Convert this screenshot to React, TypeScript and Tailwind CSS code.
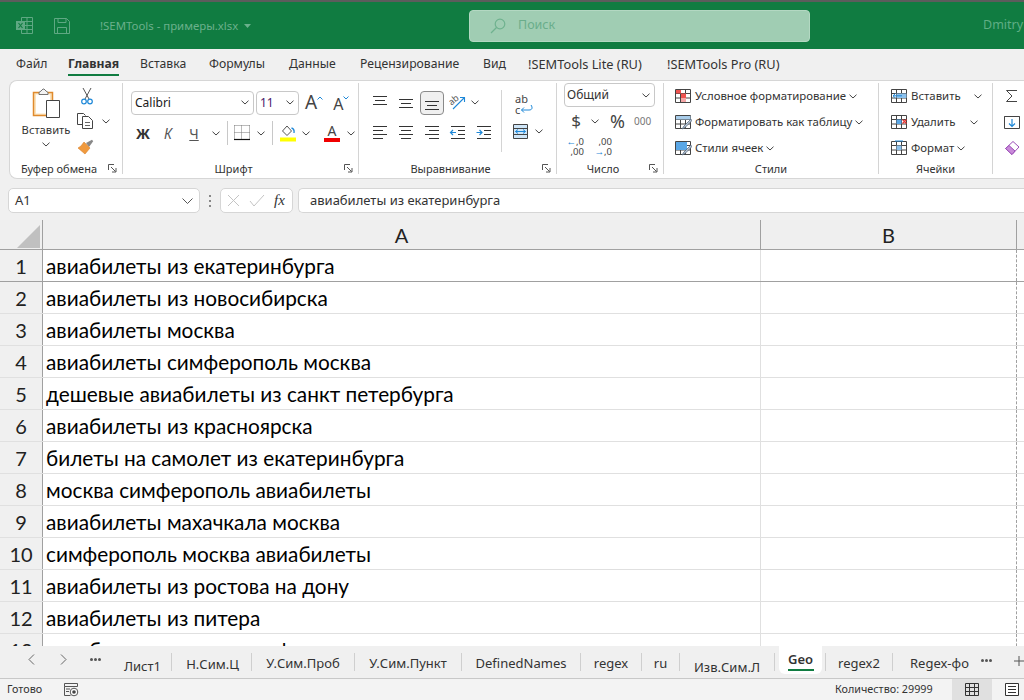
import React from 'react';

const ui = { fontFamily: '"Noto Sans", sans-serif' };
const sheet = { fontFamily: 'Lato, "Open Sans", sans-serif' };

const rows = [
  'авиабилеты из екатеринбурга',
  'авиабилеты из новосибирска',
  'авиабилеты москва',
  'авиабилеты симферополь москва',
  'дешевые авиабилеты из санкт петербурга',
  'авиабилеты из красноярска',
  'билеты на самолет из екатеринбурга',
  'москва симферополь авиабилеты',
  'авиабилеты махачкала москва',
  'симферополь москва авиабилеты',
  'авиабилеты из ростова на дону',
  'авиабилеты из питера',
  'авиабилеты москва симферополь',
];

const menu = [
  { label: 'Файл', cls: 'ml-[16px] w-[52px] text-[12.2px]' },
  { label: 'Главная', cls: 'w-[72px] text-[12.2px]', active: true },
  { label: 'Вставка', cls: 'w-[69px] text-[12.2px]' },
  { label: 'Формулы', cls: 'w-[80px] text-[12.2px]' },
  { label: 'Данные', cls: 'w-[71px] text-[12.2px]' },
  { label: 'Рецензирование', cls: 'w-[123px] text-[12.2px]' },
  { label: 'Вид', cls: 'w-[45px] text-[12.2px]' },
  { label: '!SEMTools Lite (RU)', cls: 'w-[139px] text-[12.8px]' },
  { label: '!SEMTools Pro (RU)', cls: 'w-[130px] text-[12.8px]' },
];

const tabs = [
  { name: 'Лист1', w: 'w-[60px]', pad: 'pt-[5px] pl-[2px]' },
  { name: 'Н.Сим.Ц', w: 'w-[80px]', pad: 'pt-[3px] pl-[2px]' },
  { name: 'У.Сим.Проб', w: 'w-[103px]', pad: 'pt-[2px]' },
  { name: 'У.Сим.Пункт', w: 'w-[107px]', pad: 'pt-[2px]' },
  { name: 'DefinedNames', w: 'w-[119px]', pad: 'pt-[2px]' },
  { name: 'regex', w: 'w-[61px]', pad: 'pt-[2px]' },
  { name: 'ru', w: 'w-[38px]', pad: 'pt-[2px]' },
  { name: 'Изв.Сим.Л', w: 'w-[95px]', pad: 'pt-[6px]' },
];

const Chev = ({ className = '' }: { className?: string }) => (
  <svg width="8" height="5" viewBox="0 0 8 5" className={`shrink-0 ${className}`}>
    <path d="M.5.7 4 4 7.5.7" fill="none" stroke="#444" strokeWidth="1" />
  </svg>
);

const Launcher = () => (
  <svg width="9" height="9" viewBox="0 0 9 9" className="shrink-0">
    <path d="M.5 6V.5H6" fill="none" stroke="#555" />
    <path d="M3 3l4.500 4.500M8 4v4H4" fill="none" stroke="#555" />
  </svg>
);

// label sits a little below the separator's end, so it overflows the fixed height on purpose
const Group = ({ w, children }: { w: string; children: React.ReactNode }) => (
  <div className={`${w} shrink-0 flex flex-col h-[91px] mt-[2px] border-r border-[#d4d4d4]`}>
    <div className="h-[78px] shrink-0">{children}</div>
  </div>
);

const GroupLabel = ({ label, launcher = true }: { label: string; launcher?: boolean }) => (
  <div className={`flex items-center h-[14px] ${launcher ? 'pr-[5px]' : ''}`}>
    <span className="flex-1 text-center text-[11px] text-[#333] leading-none">{label}</span>
    {launcher && <Launcher />}
  </div>
);

const Lines = ({ kind }: { kind: 'top' | 'mid' | 'bot' | 'left' | 'center' | 'right' | 'out' | 'in' }) => {
  const d: Record<string, string> = {
    top: 'M2 2.500h14M4 6.500h10M2 10.500h14',
    mid: 'M2 5.500h14M4 9.500h10M2 13.500h14',
    bot: 'M2 7.500h14M4 11.500h10M2 15.500h14',
    left: 'M2 2.500h14M2 6.500h10M2 10.500h14M2 14.500h10',
    center: 'M2 2.500h14M4 6.500h10M2 10.500h14M4 14.500h10',
    right: 'M2 2.500h14M6 6.500h10M2 10.500h14M6 14.500h10',
    out: 'M2 2.500h14M9 6.500h7M9 10.500h7M2 14.500h14',
    in: 'M2 2.500h14M9 6.500h7M9 10.500h7M2 14.500h14',
  };
  return (
    <svg width="18" height="18" viewBox="0 0 18 18">
      <path d={d[kind]} fill="none" stroke="#333" />
      {kind === 'out' && <path d="M7 8.500H1.500M4 6 1.500 8.500 4 11" fill="none" stroke="#1e88d8" strokeWidth="1.200" />}
      {kind === 'in' && <path d="M1.500 8.500H7M4.500 6 7 8.500 4.500 11" fill="none" stroke="#1e88d8" strokeWidth="1.200" />}
    </svg>
  );
};

const GridIcon = ({ children }: { children?: React.ReactNode }) => (
  <svg width="17" height="16" viewBox="0 0 17 16" className="shrink-0">
    <path d="M.5 1.500h15v13H.5zM.5 5.500h15M.5 10h15M5.500 1.500v13M10.500 1.500v13" fill="#fff" stroke="#444" />
    {children}
  </svg>
);

const Brush = () => <path d="M16 5 9 12l-2 3 3-1.500L16.500 7z" fill="#b9c6d6" stroke="#5b6d82" strokeWidth=".8" />;

const Ribbon = () => (
  <div className="ml-[9px] h-[99px] flex items-start bg-white rounded-l-lg border border-r-0 border-[#d6d6d6] text-[#333] shrink-0">
    {/* буфер обмена */}
    <Group w="w-[113px]">
      <div className="flex h-[78px]">
        <div className="w-[56px] ml-[8px] flex flex-col items-center pt-[5px]">
          <svg width="28" height="30" viewBox="0 0 28 30" className="shrink-0">
            <path d="M1.500 4.500h19v23h-19z" fill="#fbe3bd" stroke="#e08a2c" strokeWidth="1.500" />
            <path d="M4 6.500h14v19H4z" fill="#fff" />
            <path d="M7 4.500 9 3l2-2h1l2 2 2 1.500v2H7z" fill="#f3f3f3" stroke="#666" strokeWidth=".9" />
            <path d="M14.500 12.500h13v17h-13z" fill="#fff" stroke="#444" />
          </svg>
          <span className="text-[11.2px] leading-none mt-[6px]">Вставить</span>
          <Chev className="mt-[7px]" />
        </div>
        <div className="flex flex-col items-start ml-[3px] pt-[4px]">
          <svg width="16" height="18" viewBox="0 0 16 18" className="ml-[2px]">
            <path d="M4 1l6 11M12 1 6 12" fill="none" stroke="#555" strokeWidth="1" />
            <circle cx="5" cy="14.500" r="2.300" fill="none" stroke="#1e88d8" strokeWidth="1.200" />
            <circle cx="11" cy="14.500" r="2.300" fill="none" stroke="#1e88d8" strokeWidth="1.200" />
          </svg>
          <div className="flex items-center mt-[8px] gap-[8px]">
            <svg width="17" height="16" viewBox="0 0 17 16">
              <path d="M5.500 11.500h-5V.5h6l2 2" fill="none" stroke="#444" />
              <path d="M5.500 3.500h6l4 4v8h-10z" fill="#fff" stroke="#444" />
              <path d="M8 9.500h5M8 12.500h5" stroke="#666" />
            </svg>
            <Chev />
          </div>
          <svg width="17" height="16" viewBox="0 0 17 16" className="mt-[10px]">
            <path d="M9 4 15 0.800l1.200 1.400L12 8z" fill="#888" />
            <path d="M7 3 13 9 8 15 1 9 4 7z" fill="#f09a3e" stroke="#d9822b" strokeWidth=".6" />
          </svg>
        </div>
      </div>
      <GroupLabel label="Буфер обмена" />
    </Group>

    {/* шрифт */}
    <Group w="w-[236px]">
      <div className="h-[78px] pl-[8px] pt-[7px]">
        <div className="flex items-center h-[25px]">
          <div className="w-[123px] h-[24px] flex items-center justify-between px-[3px] pr-[4px] border border-[#c8c8c8] rounded-[4px] text-[12px]">
            <span className="text-[#1a1a1a]">Calibri</span>
            <Chev />
          </div>
          <div className="ml-[2px] w-[43px] h-[24px] flex items-center justify-between px-[3px] pr-[4px] border border-[#c8c8c8] rounded-[4px] text-[12px]">
            <span className="text-[#4b1a6b]">11</span>
            <Chev />
          </div>
          <span className="ml-[6px] text-[19px] leading-none text-[#444]">A</span>
          <svg width="6" height="4" viewBox="0 0 6 4" className="mb-[10px] shrink-0"><path d="M.5 3.500 3 1l2.500 2.500" fill="none" stroke="#1e88d8" /></svg>
          <span className="ml-[10px] text-[16px] leading-none text-[#444] mt-[2px]">A</span>
          <svg width="6" height="4" viewBox="0 0 6 4" className="mb-[10px] shrink-0"><path d="M.5.5 3 3 5.500.5" fill="none" stroke="#1e88d8" /></svg>
        </div>
        <div className="flex items-center h-[24px] mt-[6px]">
          <span className="w-[24px] text-center font-bold text-[14px]">Ж</span>
          <span className="w-[26px] text-center italic text-[14px] text-[#555]">К</span>
          <span className="w-[26px] text-center underline text-[14px] text-[#555]">Ч</span>
          <Chev className="ml-[5px]" />
          <span className="w-px h-[24px] bg-[#c8c8c8] ml-[7px]" />
          <svg width="16" height="16" viewBox="0 0 16 16" className="ml-[6px]">
            <path d="M.5.5h15M.5 7.500h15M.5.5v14M7.500.5v14M15.500.5v14" fill="none" stroke="#777" strokeDasharray="1 1" />
            <path d="M0 14.500h16" stroke="#111" strokeWidth="1.200" />
          </svg>
          <Chev className="ml-[7px]" />
          <span className="w-px h-[24px] bg-[#c8c8c8] ml-[7px]" />
          <svg width="16" height="17" viewBox="0 0 16 17" className="ml-[7px]">
            <path d="M7 1 2.500 6 7 10.500 11.500 6z" fill="#fff" stroke="#555" />
            <path d="M11.500 3c2 .5 3 2 2.500 5" fill="none" stroke="#1e88d8" strokeWidth="1.300" />
            <path d="M0 12.500h16v4H0z" fill="#ffff00" />
          </svg>
          <Chev className="ml-[6px]" />
          <div className="ml-[14px] w-[16px] flex flex-col items-center">
            <span className="text-[14px] leading-[13px] text-[#444]">A</span>
            <span className="w-[16px] h-[4px] bg-[#f00000] mt-[1px]" />
          </div>
          <Chev className="ml-[7px]" />
        </div>
      </div>
      <GroupLabel label="Шрифт" />
    </Group>

    {/* выравнивание */}
    <Group w="w-[198px]">
      <div className="h-[78px] flex pt-[7px]">
        <div className="w-[143px] pl-[8px] border-r border-[#d4d4d4] h-[62px]">
          <div className="flex items-center h-[25px]">
            <span className="w-[26px] flex justify-center"><Lines kind="top" /></span>
            <span className="w-[26px] flex justify-center"><Lines kind="mid" /></span>
            <span className="w-[24px] h-[24px] mx-[1px] flex items-center justify-center bg-[#f0f0f0] border border-[#8a8a8a] rounded-[4px]"><Lines kind="bot" /></span>
            <span className="w-[26px] flex justify-center">
              <svg width="18" height="18" viewBox="0 0 18 18">
                <text x="0" y="9" fontSize="9" fill="#555" transform="rotate(-40 5 7)" style={ui}>ab</text>
                <path d="M4 15 15 4M11 3.500h4.500V8" fill="none" stroke="#1e88d8" strokeWidth="1.100" />
              </svg>
            </span>
            <Chev />
          </div>
          <div className="flex items-center h-[24px] mt-[6px]">
            <span className="w-[26px] flex justify-center"><Lines kind="left" /></span>
            <span className="w-[26px] flex justify-center"><Lines kind="center" /></span>
            <span className="w-[26px] flex justify-center"><Lines kind="right" /></span>
            <span className="w-[26px] flex justify-center"><Lines kind="out" /></span>
            <span className="w-[26px] flex justify-center"><Lines kind="in" /></span>
          </div>
        </div>
        <div className="pl-[11px]">
          <div className="h-[30px] w-[24px] ml-[2px] flex flex-col text-[11px] leading-[11px] text-[#444] mt-[3px]">
            <span>ab</span>
            <span className="flex items-center">c
              <svg width="13" height="9" viewBox="0 0 13 9">
                <path d="M11 0c2 3 1 5-2 5H1.500M4 2.500 1.500 5 4 7.500" fill="none" stroke="#1e88d8" />
              </svg>
            </span>
          </div>
          <div className="flex items-center mt-[1px]">
            <svg width="15" height="15" viewBox="0 0 15 15">
              <path d="M.5.5h14v14H.5z" fill="#cfe6f8" stroke="#444" />
              <path d="M.5 4.500h14M.5 10.500h14" stroke="#444" />
              <path d="M2.500 7.500h10M5 5.500l-2.500 2 2.500 2M10 5.500l2.500 2-2.500 2" fill="none" stroke="#1e88d8" />
            </svg>
            <Chev className="ml-[7px]" />
          </div>
        </div>
      </div>
      <GroupLabel label="Выравнивание" />
    </Group>

    {/* число */}
    <Group w="w-[107px]">
      <div className="h-[78px] pl-[7px]">
        <div className="w-[91px] h-[24px] flex items-center justify-between pl-[2px] pr-[4px] border border-[#c8c8c8] rounded-[4px] text-[12px]">
          <span>Общий</span>
          <Chev />
        </div>
        <div className="flex items-center h-[26px] mt-[1px]">
          <span className="w-[24px] text-center text-[17px] text-[#444]">$</span>
          <Chev className="ml-[3px]" />
          <span className="ml-[11px] text-[18px] text-[#444] leading-none">%</span>
          <span className="ml-[9px] text-[10px] text-[#777]">000</span>
        </div>
        <div className="flex items-center h-[22px] mt-[2px]">
          <div className="ml-[1px] w-[19px] text-[9.5px] leading-[10px] text-right text-[#444]">
            <span className="text-[#1e88d8]">←</span>,0
            <br />,00
          </div>
          <div className="ml-[9px] w-[19px] text-[9.5px] leading-[10px] text-right text-[#444]">
            ,00
            <br /><span className="text-[#1e88d8]">→</span>,0
          </div>
        </div>
      </div>
      <GroupLabel label="Число" />
    </Group>

    {/* стили */}
    <Group w="w-[215px]">
      <div className="h-[78px] pl-[11px] flex flex-col text-[11.4px]">
        <div className="flex items-center h-[26px] gap-[3px]">
          <GridIcon><path d="M1 2h5v3.500H1zM6 5.500h5v4.500H6z" fill="#ef5350" /><path d="M6 10h5v4H6z" fill="#f4a6a6" /></GridIcon>
          <span>Условное форматирование</span><Chev />
        </div>
        <div className="flex items-center h-[26px] gap-[3px]">
          <GridIcon><path d="M1 2h14.500v3.500H1z" fill="#a9cdea" /><Brush /></GridIcon>
          <span>Форматировать как таблицу</span><Chev />
        </div>
        <div className="flex items-center h-[26px] gap-[3px]">
          <GridIcon><path d="M1 2h11v8H1z" fill="#5aa7e6" /><Brush /></GridIcon>
          <span>Стили ячеек</span><Chev />
        </div>
      </div>
      <GroupLabel label="Стили" launcher={false} />
    </Group>

    {/* ячейки */}
    <Group w="w-[114px]">
      <div className="h-[78px] pl-[12px] flex flex-col text-[11.4px]">
        <div className="flex items-center h-[26px]">
          <GridIcon><path d="M5.500 5.500h10V10h-10z" fill="#8cc2ee" /><path d="M11 7.800H2M4.500 5.500 2 7.800 4.500 10" fill="#fff" stroke="#1e88d8" /></GridIcon>
          <span className="ml-[3px] w-[62px]">Вставить</span><Chev className="ml-[1px]" />
        </div>
        <div className="flex items-center h-[26px]">
          <GridIcon><path d="M5.500 5.500h5V10h-5z" fill="#5aa7e6" /><path d="M11.500 5.500l4 4M15.500 5.500l-4 4" stroke="#e53935" strokeWidth="1.300" /></GridIcon>
          <span className="ml-[3px] w-[58px]">Удалить</span><Chev className="ml-[1px]" />
        </div>
        <div className="flex items-center h-[26px] gap-[3px]">
          <GridIcon><path d="M4 1H12" stroke="#1e88d8" /><path d="M5.500 5.500h5v4.500h-5z" fill="#8cc2ee" /></GridIcon>
          <span>Формат</span><Chev />
        </div>
      </div>
      <GroupLabel label="Ячейки" launcher={false} />
    </Group>

    {/* редактирование */}
    <div className="pl-[11px] mt-[2px] flex flex-col shrink-0">
      <div className="h-[26px] flex items-center">
        <svg width="16" height="16" viewBox="0 0 16 16"><path d="M13 2.500H2.500L8 8l-5.500 5.500H13" fill="none" stroke="#444" /></svg>
      </div>
      <div className="h-[26px] flex items-center">
        <svg width="16" height="16" viewBox="0 0 16 16">
          <path d="M.5 2.500h15v12H.5zM.5 2.500h15" fill="#fff" stroke="#444" />
          <path d="M8 5v7M5 9.500 8 12.500 11 9.500" fill="none" stroke="#1e88d8" strokeWidth="1.200" />
        </svg>
      </div>
      <div className="h-[26px] flex items-center">
        <svg width="16" height="16" viewBox="0 0 16 16">
          <path d="M9 1.500 15 7 8 14.500 1.500 8.500z" fill="#fff" stroke="#9c4fb8" />
          <path d="M5 5.500 11 11 8 14.500 1.500 8.500z" fill="#c98ad9" stroke="#9c4fb8" />
        </svg>
      </div>
    </div>
  </div>
);

const FormulaBar = () => (
  <div className="h-[41px] shrink-0 flex items-center pl-[8px] pt-[2px] text-[13px] text-[#333]">
    <div className="w-[192px] h-[25px] bg-white border border-[#d6d6d6] rounded-[5px] flex items-center justify-between pl-[6px] pr-[6px]">
      <span>A1</span>
      <svg width="11" height="6" viewBox="0 0 11 6"><path d="M.5.5l5 5 5-5" fill="none" stroke="#555" /></svg>
    </div>
    <div className="w-[20px] flex flex-col items-center gap-[3px]">
      <span className="w-[2px] h-[2px] bg-[#888]" />
      <span className="w-[2px] h-[2px] bg-[#888]" />
      <span className="w-[2px] h-[2px] bg-[#888]" />
    </div>
    <div className="w-[73px] h-[25px] bg-white border border-[#d6d6d6] rounded-[5px] flex items-center pl-[6px]">
      <svg width="13" height="13" viewBox="0 0 13 13"><path d="M1 1l11 11M12 1 1 12" stroke="#c4c4c4" /></svg>
      <svg width="16" height="13" viewBox="0 0 16 13" className="ml-[9px]"><path d="M1 7l4 5L15 1" fill="none" stroke="#c4c4c4" /></svg>
      <span className="ml-[9px] italic text-[15px] text-[#333] leading-none" style={{ fontFamily: '"Liberation Serif", serif' }}>fx</span>
    </div>
    <div className="ml-[5px] flex-1 h-[25px] bg-white border border-r-0 border-[#d6d6d6] rounded-l-[5px] flex items-center pl-[11px]">
      авиабилеты из екатеринбурга
    </div>
  </div>
);

const Grid = () => (
  <div className="flex-1 min-h-0 overflow-hidden" style={sheet}>
    <div className="flex h-[30px] bg-[#efefef] border-b border-[#a0a0a0] text-[20px] text-[#222]">
      <div className="w-[43px] shrink-0 border-r border-[#a0a0a0] flex items-end justify-end pr-[2px] pb-[1px]">
        <svg width="23" height="23" viewBox="0 0 23 23"><path d="M23 0v23H0z" fill="#c0c0c0" /></svg>
      </div>
      <div className="w-[718px] shrink-0 border-r border-[#a0a0a0] flex items-center justify-center">A</div>
      <div className="w-[256px] shrink-0 border-r border-[#a0a0a0] flex items-center justify-center">B</div>
    </div>
    {rows.map((text, i) => (
      <div key={i} className={`flex h-[32px] border-b ${i === 0 ? 'border-[#a0a0a0]' : 'border-[#e0e0e0]'}`}>
        <div className="w-[43px] shrink-0 bg-[#f0f0f0] border-r border-[#a0a0a0] flex items-center justify-center text-[20px] text-[#222]">{i + 1}</div>
        <div className="w-[718px] shrink-0 bg-white border-r border-[#e0e0e0] flex items-center pl-[3px] text-[20.8px] text-black whitespace-nowrap">{text}</div>
        <div className="w-[256px] shrink-0 bg-white border-r border-dashed border-[#a0a0a0]" />
        <div className="flex-1 bg-white" />
      </div>
    ))}
  </div>
);

const TabBar = () => (
  <div className="h-[32px] shrink-0 flex items-start bg-[#f0f0f0] text-[13px] text-[#333] whitespace-nowrap overflow-hidden">
    <div className="w-[112px] shrink-0 h-[32px] flex items-center pl-[28px] pb-[6px]">
      <svg width="7" height="11" viewBox="0 0 7 11"><path d="M6 .5 1 5.500l5 5" fill="none" stroke="#666" /></svg>
      <svg width="7" height="11" viewBox="0 0 7 11" className="ml-[25px]"><path d="M1 .5l5 5-5 5" fill="none" stroke="#666" /></svg>
      <span className="ml-[23px] flex gap-[1px]">
        <span className="w-[3px] h-[3px] rounded-full bg-[#555]" />
        <span className="w-[3px] h-[3px] rounded-full bg-[#555]" />
        <span className="w-[3px] h-[3px] rounded-full bg-[#555]" />
      </span>
    </div>
    {tabs.map((t) => (
      <div key={t.name} className={`${t.w} shrink-0 mt-[7px] h-[18px] border-r border-[#cfcfcf] flex justify-center items-start`}>
        <span className={`${t.pad} leading-[16px]`}>{t.name}</span>
      </div>
    ))}
    <div className="ml-[4px] w-[43px] h-[28px] shrink-0 bg-white rounded-b-[6px] flex flex-col items-center pt-[5px] font-semibold leading-[16px]">
      Geo
      <span className="w-[26px] h-[2px] bg-[#107c41] mt-[2px]" />
    </div>
    <div className="ml-[3px] mt-[7px] h-[18px] border-l border-r border-[#cfcfcf] w-[68px] shrink-0 flex justify-center pt-[2px] leading-[16px]">regex2</div>
    <div className="ml-[17px] mt-[9px] w-[60px] shrink-0 leading-[16px] overflow-hidden">Regex-фо</div>
    <span className="ml-[11px] mt-[13px] flex gap-[1px] shrink-0">
      <span className="w-[3px] h-[3px] rounded-full bg-[#555]" />
      <span className="w-[3px] h-[3px] rounded-full bg-[#555]" />
      <span className="w-[3px] h-[3px] rounded-full bg-[#555]" />
    </span>
    <svg width="10" height="10" viewBox="0 0 10 10" className="ml-[22px] mt-[10px] shrink-0"><path d="M5 0v10M0 5h10" stroke="#555" /></svg>
  </div>
);

const StatusBar = () => (
  <div className="h-[22px] shrink-0 flex items-center bg-[#f3f3f3] border-t border-[#c8c8c8] pl-[7px] text-[10.8px] text-[#333]">
    <span className="w-[57px]">Готово</span>
    <svg width="15" height="14" viewBox="0 0 15 14">
      <path d="M.5.5h13v3H.5zM.5 3.500v9h6" fill="none" stroke="#555" />
      <path d="M2 6h4M2 8.500h3" stroke="#555" />
      <circle cx="10" cy="9" r="3.800" fill="#fff" stroke="#555" />
      <circle cx="10" cy="9" r="1.800" fill="#444" />
    </svg>
    <span className="ml-[756px] w-[117px] whitespace-nowrap">Количество: 29999</span>
    <div className="w-[40px] h-[21px] bg-[#e0e0e0] flex items-center justify-center">
      <svg width="14" height="13" viewBox="0 0 14 13"><path d="M.5.500h13v12H.5zM.5 4.500h13M.5 8.500h13M4.500.500v12M9.500.500v12" fill="none" stroke="#333" /></svg>
    </div>
    <svg width="14" height="13" viewBox="0 0 14 13" className="ml-[13px] shrink-0"><path d="M.5.500h13v12H.5z" fill="#fff" stroke="#333" /><path d="M3 3.500h8M3 6.500h8M3 9.500h8" stroke="#333" /></svg>
  </div>
);

export default function App() {
  return (
    <div className="w-[1024px] h-[700px] flex flex-col overflow-hidden bg-[#f0f0f0]" style={ui}>
      <div className="h-[49px] shrink-0 flex items-center bg-[#107c41] border-t-2 border-[#5c5c5c] whitespace-nowrap">
        <svg width="17" height="17" viewBox="0 0 17 17" className="ml-[16px] shrink-0">
          <path d="M5.500.500h11v16h-11zM5.500 4.500h11M5.500 8.500h11M5.500 12.500h11M11 .500v16" fill="none" stroke="#5fa883" />
          <path d="M0 4h9v9H0z" fill="#5fa883" />
          <path d="M2.500 6 6.500 11M6.500 6l-4 5" stroke="#107c41" strokeWidth="1.200" />
        </svg>
        <svg width="16" height="16" viewBox="0 0 16 16" className="ml-[21px] shrink-0">
          <path d="M.5.500h12l3 3v12H.5zM4 .500v4h8v-4M3.500 15.500v-6h9v6" fill="none" stroke="#5fa883" />
        </svg>
        <span className="ml-[30px] w-[138px] shrink-0 text-[11.4px] text-[#6bb08c]">!SEMTools - примеры.xlsx</span>
        <svg width="7" height="4" viewBox="0 0 7 4" className="ml-[6px] shrink-0"><path d="M0 0h7L3.500 4z" fill="#6bb08c" /></svg>
        <div className="ml-[218px] w-[341px] h-[32px] shrink-0 flex items-center bg-[#a0cdb3] border border-[#b3d8c2] rounded-[4px]">
          <svg width="16" height="16" viewBox="0 0 16 16" className="ml-[20px]">
            <circle cx="10" cy="6" r="4.800" fill="none" stroke="#6fb28f" strokeWidth="1.200" />
            <path d="M6.500 9.500 1 15" stroke="#6fb28f" strokeWidth="1.200" />
          </svg>
          <span className="ml-[12px] text-[12.5px] text-[#6aad8b]">Поиск</span>
        </div>
        <span className="ml-[173px] shrink-0 text-[12.5px] text-[#5fae85]">Dmitry T</span>
      </div>

      <div className="h-[31px] shrink-0 flex items-center text-[#333] whitespace-nowrap">
        {menu.map((m) => (
          <div key={m.label} className={`${m.cls} shrink-0 h-[31px] flex items-center`}>
            {m.active ? (
              <span className="relative h-[31px] flex items-center font-bold">
                {m.label}
                <span className="absolute left-0 right-0 bottom-[4px] h-[2px] bg-[#107c41]" />
              </span>
            ) : (
              m.label
            )}
          </div>
        ))}
      </div>

      <Ribbon />
      <FormulaBar />
      <Grid />
      <TabBar />
      <StatusBar />
    </div>
  );
}
